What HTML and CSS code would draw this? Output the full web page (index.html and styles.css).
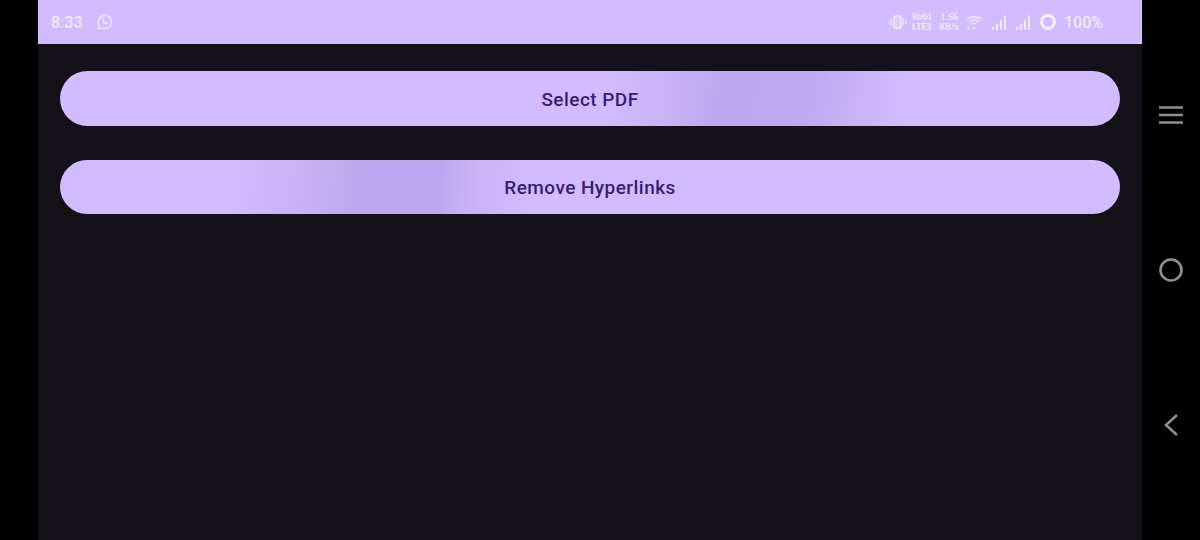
FILE: index.html

```html
<!DOCTYPE html>
<html lang="en">
<head>
  <meta charset="UTF-8">
  <meta name="viewport" content="width=device-width, initial-scale=1.0">
  <title>Remove Hyperlinks</title>
  <link rel="stylesheet" href="styles.css">
</head>
<body>

  <div class="screen">
    <div class="status-bar">
      <span class="time">8:33</span>
      <svg class="whatsapp" width="16" height="16" viewBox="0 0 16 16">
        <path d="M1.200 14.800l1-3.600A6.600 6.600 0 1 1 4.800 13.800z" fill="none" stroke="#f1eaff" stroke-width="1.400" stroke-linejoin="round"/>
        <path d="M5.700 4.700c-.9.8-.7 2 .4 3.500 1.100 1.500 2.500 2.300 3.700 2.100.8-.2 1.300-.8 1.200-1.300l-1.500-.9-.7.7c-.8-.3-1.600-1.100-2-2l.6-.8-.8-1.600c-.3-.1-.6 0-.9.3z" fill="#f1eaff"/>
      </svg>

      <div class="status-right">
        <svg class="vibrate" width="19" height="14" viewBox="0 0 19 14">
          <rect x="6" y="1" width="7" height="12" rx="1" fill="#f1eaff" fill-opacity=".35" stroke="#f1eaff" stroke-width="1.500"/>
          <path d="M3.500 3.500v7M1 5.500v3M15.500 3.500v7M18 5.500v3" stroke="#f1eaff" stroke-width="1.400"/>
        </svg>
        <div class="tiny tiny-volte"><span>Vo61</span><span>LTE2</span></div>
        <div class="tiny tiny-speed"><span>1.55</span><span>KB/s</span></div>
        <svg class="wifi" width="16" height="15" viewBox="0 0 16 15">
          <path d="M1 4.500a10 10 0 0 1 14 0M3.200 7a7 7 0 0 1 9.600 0M5.400 9.500a3.800 3.800 0 0 1 5.200 0" fill="none" stroke="#f1eaff" stroke-width="1.500"/>
          <path d="M1.500 11.500h2M1.500 14h2M6 13h3" stroke="#f1eaff" stroke-width="1.300"/>
        </svg>
        <svg class="signal" width="15" height="15" viewBox="0 0 15 15">
          <path d="M2 12v3M6 9v6M10 5v10M14 0v15" stroke="#f1eaff" stroke-width="2"/>
        </svg>
        <svg class="signal" width="15" height="15" viewBox="0 0 15 15">
          <path d="M2 12v3M6 9v6M10 5v10M14 0v15" stroke="#f1eaff" stroke-width="2"/>
        </svg>
        <span class="battery-ring"></span>
        <span class="battery-text">100%</span>
      </div>
    </div>

    <div class="content">
      <button class="btn btn-select">Select PDF</button>
      <button class="btn btn-remove">Remove Hyperlinks</button>
    </div>
  </div>

  <div class="nav-bar">
    <svg width="26" height="20" viewBox="0 0 26 20">
      <path d="M1 2.500h24M1 10h24M1 17.500h24" stroke="#8f8f8f" stroke-width="2.600"/>
    </svg>
    <svg class="nav-home" width="26" height="26" viewBox="0 0 26 26">
      <circle cx="13" cy="13" r="10.500" fill="none" stroke="#8f8f8f" stroke-width="2.600"/>
    </svg>
    <svg class="nav-back" width="18" height="24" viewBox="0 0 18 24">
      <path d="M15 2L4 12l11 10" fill="none" stroke="#8f8f8f" stroke-width="2.600"/>
    </svg>
  </div>

</body>
</html>
```

FILE: styles.css

```css
body {
  margin: 0;
  height: 540px;
  overflow: hidden;
  background: #000;
  display: flex;
  font-family: Roboto, "Noto Sans", sans-serif;
}
.screen {
  width: 1104px;
  margin-left: 38px;
  background: #141218;
  display: flex;
  flex-direction: column;
}
.status-bar {
  height: 44px;
  background: #d0bcff;
  display: flex;
  align-items: center;
  padding: 0 39px 0 13px;
  color: #f1eaff;
}
.time {
  font-size: 16px;
  font-weight: 500;
}
.whatsapp {
  margin-left: 14px;
}
.status-right {
  margin-left: auto;
  display: flex;
  align-items: center;
}
.tiny {
  display: flex;
  flex-direction: column;
  font-size: 9px;
  font-weight: 700;
  line-height: 10px;
  text-align: center;
}
.tiny-volte {
  margin-left: 4px;
}
.tiny-speed {
  margin-left: 7px;
}
.wifi {
  margin-left: 7px;
}
.signal {
  margin-left: 9px;
}
.signal + .signal {
  margin-left: 9px;
}
.battery-ring {
  width: 10px;
  height: 10px;
  margin-left: 10px;
  border: 3px solid #f4eeff;
  border-radius: 50%;
}
.battery-text {
  margin-left: 8px;
  font-size: 16px;
  font-weight: 500;
}
.content {
  padding: 27px 22px 0;
  display: flex;
  flex-direction: column;
  gap: 34px;
}
.btn {
  height: 55px;
  border: none;
  border-radius: 28px;
  padding: 0;
  font-family: inherit;
  font-size: 19px;
  font-weight: 500;
  letter-spacing: 0.45px;
  color: #381e72;
  background-color: #d0bcff;
}
.btn-select {
  padding-top: 2px;
  background-image: linear-gradient(96deg, #d0bcff 545px, #c8b4f7 600px, #bca8ec 660px, #bfabef 760px, #c8b4f7 800px, #d0bcff 845px);
}
.btn-remove {
  height: 54px;
  padding-top: 1px;
  background-image: linear-gradient(96deg, #d0bcff 170px, #c8b4f7 230px, #bca8ec 300px, #bca8ec 380px, #c8b4f7 420px, #d0bcff 470px);
}
.nav-bar {
  width: 58px;
  display: flex;
  flex-direction: column;
  align-items: center;
  box-sizing: border-box;
  padding-top: 105px;
  gap: 130px;
}
.nav-home {
  margin-top: 2px;
}
```
